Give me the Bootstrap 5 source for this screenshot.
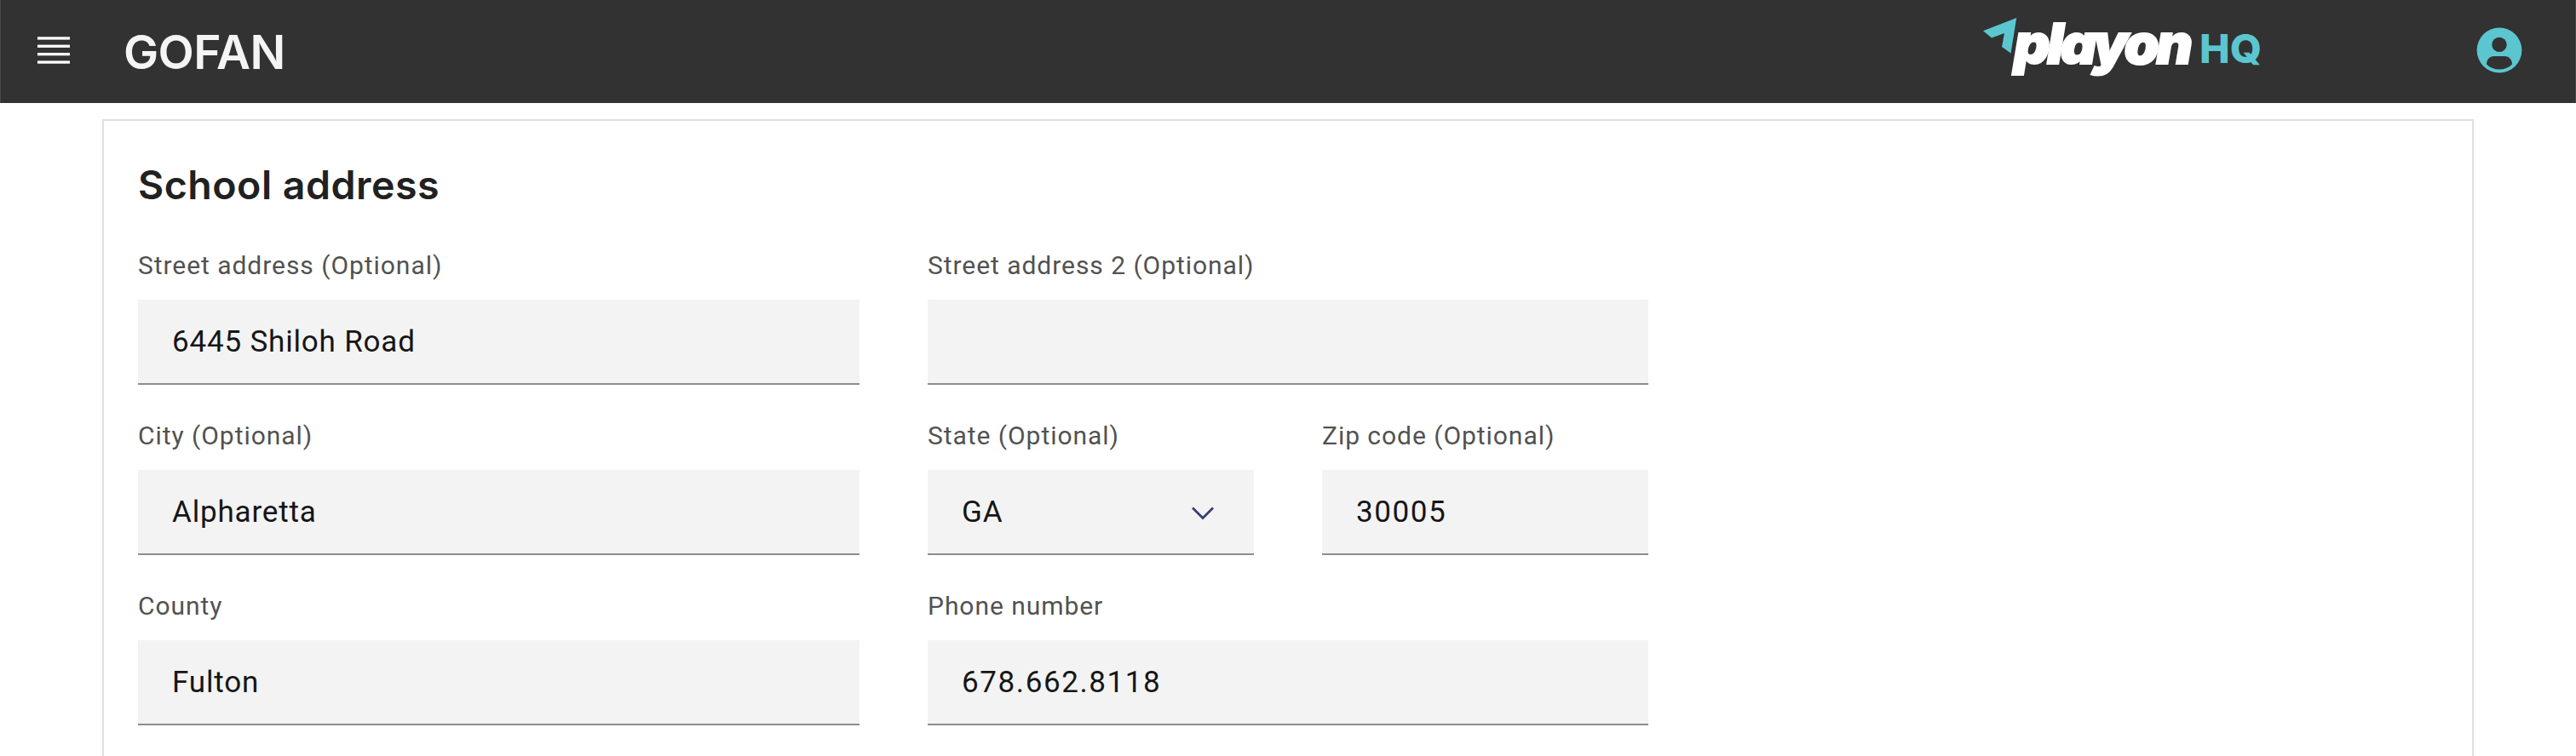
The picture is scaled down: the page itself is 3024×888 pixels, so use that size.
<!DOCTYPE html>
<html lang="en">
<head>
<meta charset="utf-8">
<meta name="viewport" content="width=device-width, initial-scale=1">
<title>GoFan - School address</title>
<link href="https://cdn.jsdelivr.net/npm/bootstrap@5.3.0/dist/css/bootstrap.min.css" rel="stylesheet">
<style>
  body { font-family: Roboto, "Liberation Sans", sans-serif; color: #161616; background: #fff; height: 100vh; }
  .topbar { height: 121px; background: #323232; border: 0 solid #484848; border-width: 0 1px; padding: 0 62px 0 43px; }
  .menu-btn { width: 38px; height: 34px; margin: 0 63px 3px 0; }
  .avatar { margin-bottom: 3px; }
  .brand { font: 600 55px/60px Inter, sans-serif; color: #f4f4f4; letter-spacing: -.6px; }
  .logo { width: 340px; height: 121px; margin-right: 246px; }
  .wordmark { font-family: Inter, sans-serif; font-weight: 900; font-style: italic; font-size: 66px; fill: #fff; stroke: #fff; stroke-width: 2px; }
  .panel { border: 2px solid #e0e0e0; border-bottom: 0; border-radius: 0; margin: 19px 120px 0; padding: 45px 40px 0; }
  .panel h1 { font: 600 46.5px/60px Inter, sans-serif; letter-spacing: .5px; color: #212121; margin: 0 0 45px; }
  .address-form { display: grid; grid-template-columns: 847px 383px 383px; gap: 40px 80px; }
  .span-two { grid-column: span 2; }
  .address-form .form-label { display: block; font-size: 30px; line-height: 40px; letter-spacing: .95px; color: #525252; margin: 0 0 20px; }
  .address-form .field-box { height: 100px; background-color: #f3f3f3; border: 0; border-bottom: 2px solid #8d8d8d; border-radius: 0; padding: 1px 40px 0; font-size: 35px; line-height: 48px; letter-spacing: .82px; color: #161616; }
  .address-form .digits { letter-spacing: 1.6px; }
  .address-form select.field-box { background-image: none; }
  .chevron { right: 46px; top: 42px; width: 28px; height: 17px; pointer-events: none; }
</style>
</head>
<body class="d-flex flex-column overflow-hidden">
<nav class="topbar d-flex align-items-center flex-shrink-0">
  <svg class="menu-btn" viewBox="0 0 38 34" fill="#fff" role="img" aria-label="Menu">
    <rect y="1.3" width="38" height="3.3"/><rect y="10.6" width="38" height="3.3"/><rect y="20" width="38" height="3.3"/><rect y="29.4" width="38" height="3.3"/>
  </svg>
  <div class="brand">GOFAN</div>
  <svg class="logo ms-auto" viewBox="2320 0 340 121" role="img" aria-label="playon HQ">
    <path fill="#5bc6d0" d="M2327 36.2 2366.200 21 2359.500 62.500 2349 55 2352 39 2337 44.500Z"/>
    <text class="wordmark" x="2363" y="74.500" textLength="210" lengthAdjust="spacing">playon</text>
    <text x="2581" y="74" font-family="Inter, sans-serif" font-weight="800" font-size="47" fill="#5bc6d0" textLength="73" lengthAdjust="spacingAndGlyphs">HQ</text>
  </svg>
  <svg class="avatar" width="54" height="54" viewBox="2907 32 54 54" role="img" aria-label="Account">
    <circle cx="2934" cy="59" r="26.4" fill="#5bc6d0"/>
    <circle cx="2934" cy="52.4" r="8.7" fill="#323232"/>
    <path fill="#323232" d="M2919 75.5C2919 70 2922.5 66 2928 66H2940C2945.500 66 2949 70 2949 75.500C2941 83.500 2927 83.500 2919 75.500Z"/>
  </svg>
</nav>
<main class="card panel flex-fill">
  <h1>School address</h1>
  <form class="address-form">
    <div><label class="form-label" for="street">Street address (Optional)</label><input id="street" class="form-control field-box" value="6445 Shiloh Road"></div>
    <div class="span-two"><label class="form-label" for="street2">Street address 2 (Optional)</label><input id="street2" class="form-control field-box"></div>
    <div><label class="form-label" for="city">City (Optional)</label><input id="city" class="form-control field-box" value="Alpharetta"></div>
    <div><label class="form-label" for="state">State (Optional)</label>
      <div class="position-relative"><select id="state" class="form-select field-box"><option>GA</option></select>
        <svg class="chevron position-absolute" viewBox="0 0 28 17" fill="none" stroke="#393f73" stroke-width="2.8"><path d="M2 2.500 14 14.500 26 2.500"/></svg>
      </div></div>
    <div><label class="form-label" for="zip">Zip code (Optional)</label><input id="zip" class="form-control field-box digits" value="30005"></div>
    <div><label class="form-label" for="county">County</label><input id="county" class="form-control field-box" value="Fulton"></div>
    <div class="span-two"><label class="form-label" for="phone">Phone number</label><input id="phone" class="form-control field-box digits" value="678.662.8118"></div>
  </form>
</main>
<script src="https://cdn.jsdelivr.net/npm/bootstrap@5.3.0/dist/js/bootstrap.bundle.min.js"></script>
</body>
</html>
